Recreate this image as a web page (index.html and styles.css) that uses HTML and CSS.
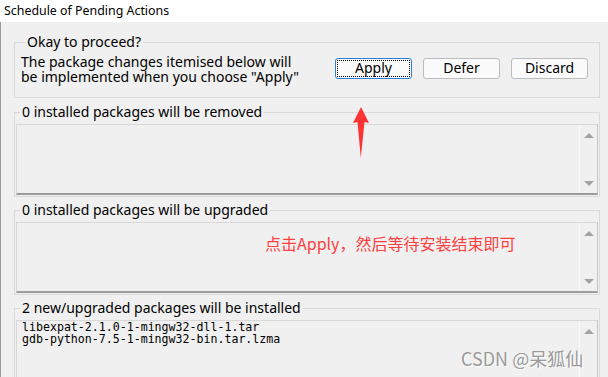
FILE: index.html
```html
<!DOCTYPE html>
<html>
<head>
  <meta charset="UTF-8">
  <title>Schedule of Pending Actions</title>
  <link rel="stylesheet" href="styles.css">
</head>
<body>
  <div class="window">
    <div class="titlebar">Schedule of Pending Actions</div>
    <div class="content">
      <fieldset class="group confirm">
        <legend>Okay to proceed?</legend>
        <div class="confirm-row">
          <p class="prompt">The package changes itemised below will<br>be implemented when you choose "Apply"</p>
          <div class="buttons">
            <button class="btn default">Apply</button>
            <button class="btn">Defer</button>
            <button class="btn">Discard</button>
          </div>
        </div>
      </fieldset>

      <fieldset class="group">
        <legend>0 installed packages will be removed</legend>
        <div class="listbox short">
          <div class="items"></div>
          <div class="scrollbar"><span class="arrow up"></span><span class="arrow down"></span></div>
        </div>
      </fieldset>

      <fieldset class="group">
        <legend>0 installed packages will be upgraded</legend>
        <div class="listbox short">
          <div class="items"></div>
          <div class="scrollbar"><span class="arrow up"></span><span class="arrow down"></span></div>
        </div>
      </fieldset>

      <fieldset class="group">
        <legend>2 new/upgraded packages will be installed</legend>
        <div class="listbox tall">
          <div class="items">
            <div>libexpat-2.1.0-1-mingw32-dll-1.tar</div>
            <div>gdb-python-7.5-1-mingw32-bin.tar.lzma</div>
          </div>
          <div class="scrollbar"><span class="arrow up"></span></div>
        </div>
      </fieldset>
    </div>

    <!-- annotations drawn over the screenshot -->
    <svg class="note-arrow" width="16" height="52" viewBox="0 0 16 52">
      <polygon points="8,0 16,16 11.5,15 7.8,51 4.5,15 0,16" fill="#fe3434"/>
    </svg>
    <div class="note">点击Apply，然后等待安装结束即可</div>
    <div class="watermark">CSDN @呆狐仙</div>
  </div>
</body>
</html>
```

FILE: styles.css
```css
html, body {
    margin: 0;
    height: 100%;
    overflow: hidden;
}
body {
    background: #f0f0f0;
    font-family: 'Noto Sans', 'Open Sans', sans-serif;
    color: #000;
}
.window {
    position: relative;
    height: 100%;
}
.titlebar {
    height: 22px;
    line-height: 21px;
    background: #fff;
    padding-left: 4px;
    font-size: 12.4px;
}
.content {
    border-left: 1px solid #9a9a9a;
    padding: 12px 8px 0 13px;
    height: 100%;
}
.group {
    margin: 0 0 5px 0;
    padding: 0 1px 1px 1px;
    border: 1px solid #dadada;
    min-width: 0;
}
.group legend {
    margin-left: 4px;
    padding: 0 2px;
    font-size: 14px;
    line-height: 16px;
}
.confirm {
    margin-bottom: 6px;
    padding: 4px 11px 13px 6px;
}
.confirm-row {
    display: flex;
    align-items: center;
    justify-content: space-between;
}
.prompt {
    margin: 0;
    font-size: 14px;
    line-height: 15px;
}
.buttons {
    display: flex;
    gap: 11px;
    margin-top: -2px;
}
.btn {
    width: 77px;
    height: 21px;
    padding: 0;
    font-family: 'Noto Sans', 'Open Sans', sans-serif;
    font-size: 14px;
    line-height: 18px;
    color: #000;
    background: #fbfbfb;
    border: 1px solid #bcbcbc;
    border-radius: 3px;
}
.btn.default {
    border-color: #2a7fd4;
    outline: 1px dotted #000;
    outline-offset: -3px;
}
.listbox {
    display: flex;
    margin-top: 4px;
    border-top: 1px solid #d8d8d8;
    border-left: 1px solid #d8d8d8;
    border-right: 1px solid #c4c4c4;
    border-bottom: 2px solid #9c9c9c;
    background: #f0f0f0;
}
.listbox.short {
    height: 68px;
}
.listbox.tall {
    height: 120px;
}
.items {
    flex: 1;
    padding: 1px 5px;
    font-family: 'DejaVu Sans Mono', monospace;
    font-size: 11.6px;
    line-height: 11.5px;
}
.scrollbar {
    width: 17px;
    border-left: 1px solid #fafafa;
    display: flex;
    flex-direction: column;
    justify-content: space-between;
    align-items: center;
    padding: 8px 0 7px;
}
.arrow {
    width: 0;
    height: 0;
    border-left: 5px solid transparent;
    border-right: 5px solid transparent;
}
.arrow.up {
    border-bottom: 5px solid #a3a3a3;
}
.arrow.down {
    border-top: 5px solid #a3a3a3;
}
.note-arrow {
    position: absolute;
    left: 353px;
    top: 107px;
}
.note {
    position: absolute;
    left: 265px;
    top: 232px;
    font-family: 'Noto Sans CJK SC', sans-serif;
    font-size: 16px;
    line-height: 22px;
    color: #fe4040;
}
.watermark {
    position: absolute;
    left: 461px;
    top: 345px;
    font-family: 'Noto Sans CJK SC', sans-serif;
    font-size: 18px;
    line-height: 26px;
    color: #9a9a9a;
    text-shadow: 1px 1px 0 #fff;
}
```
